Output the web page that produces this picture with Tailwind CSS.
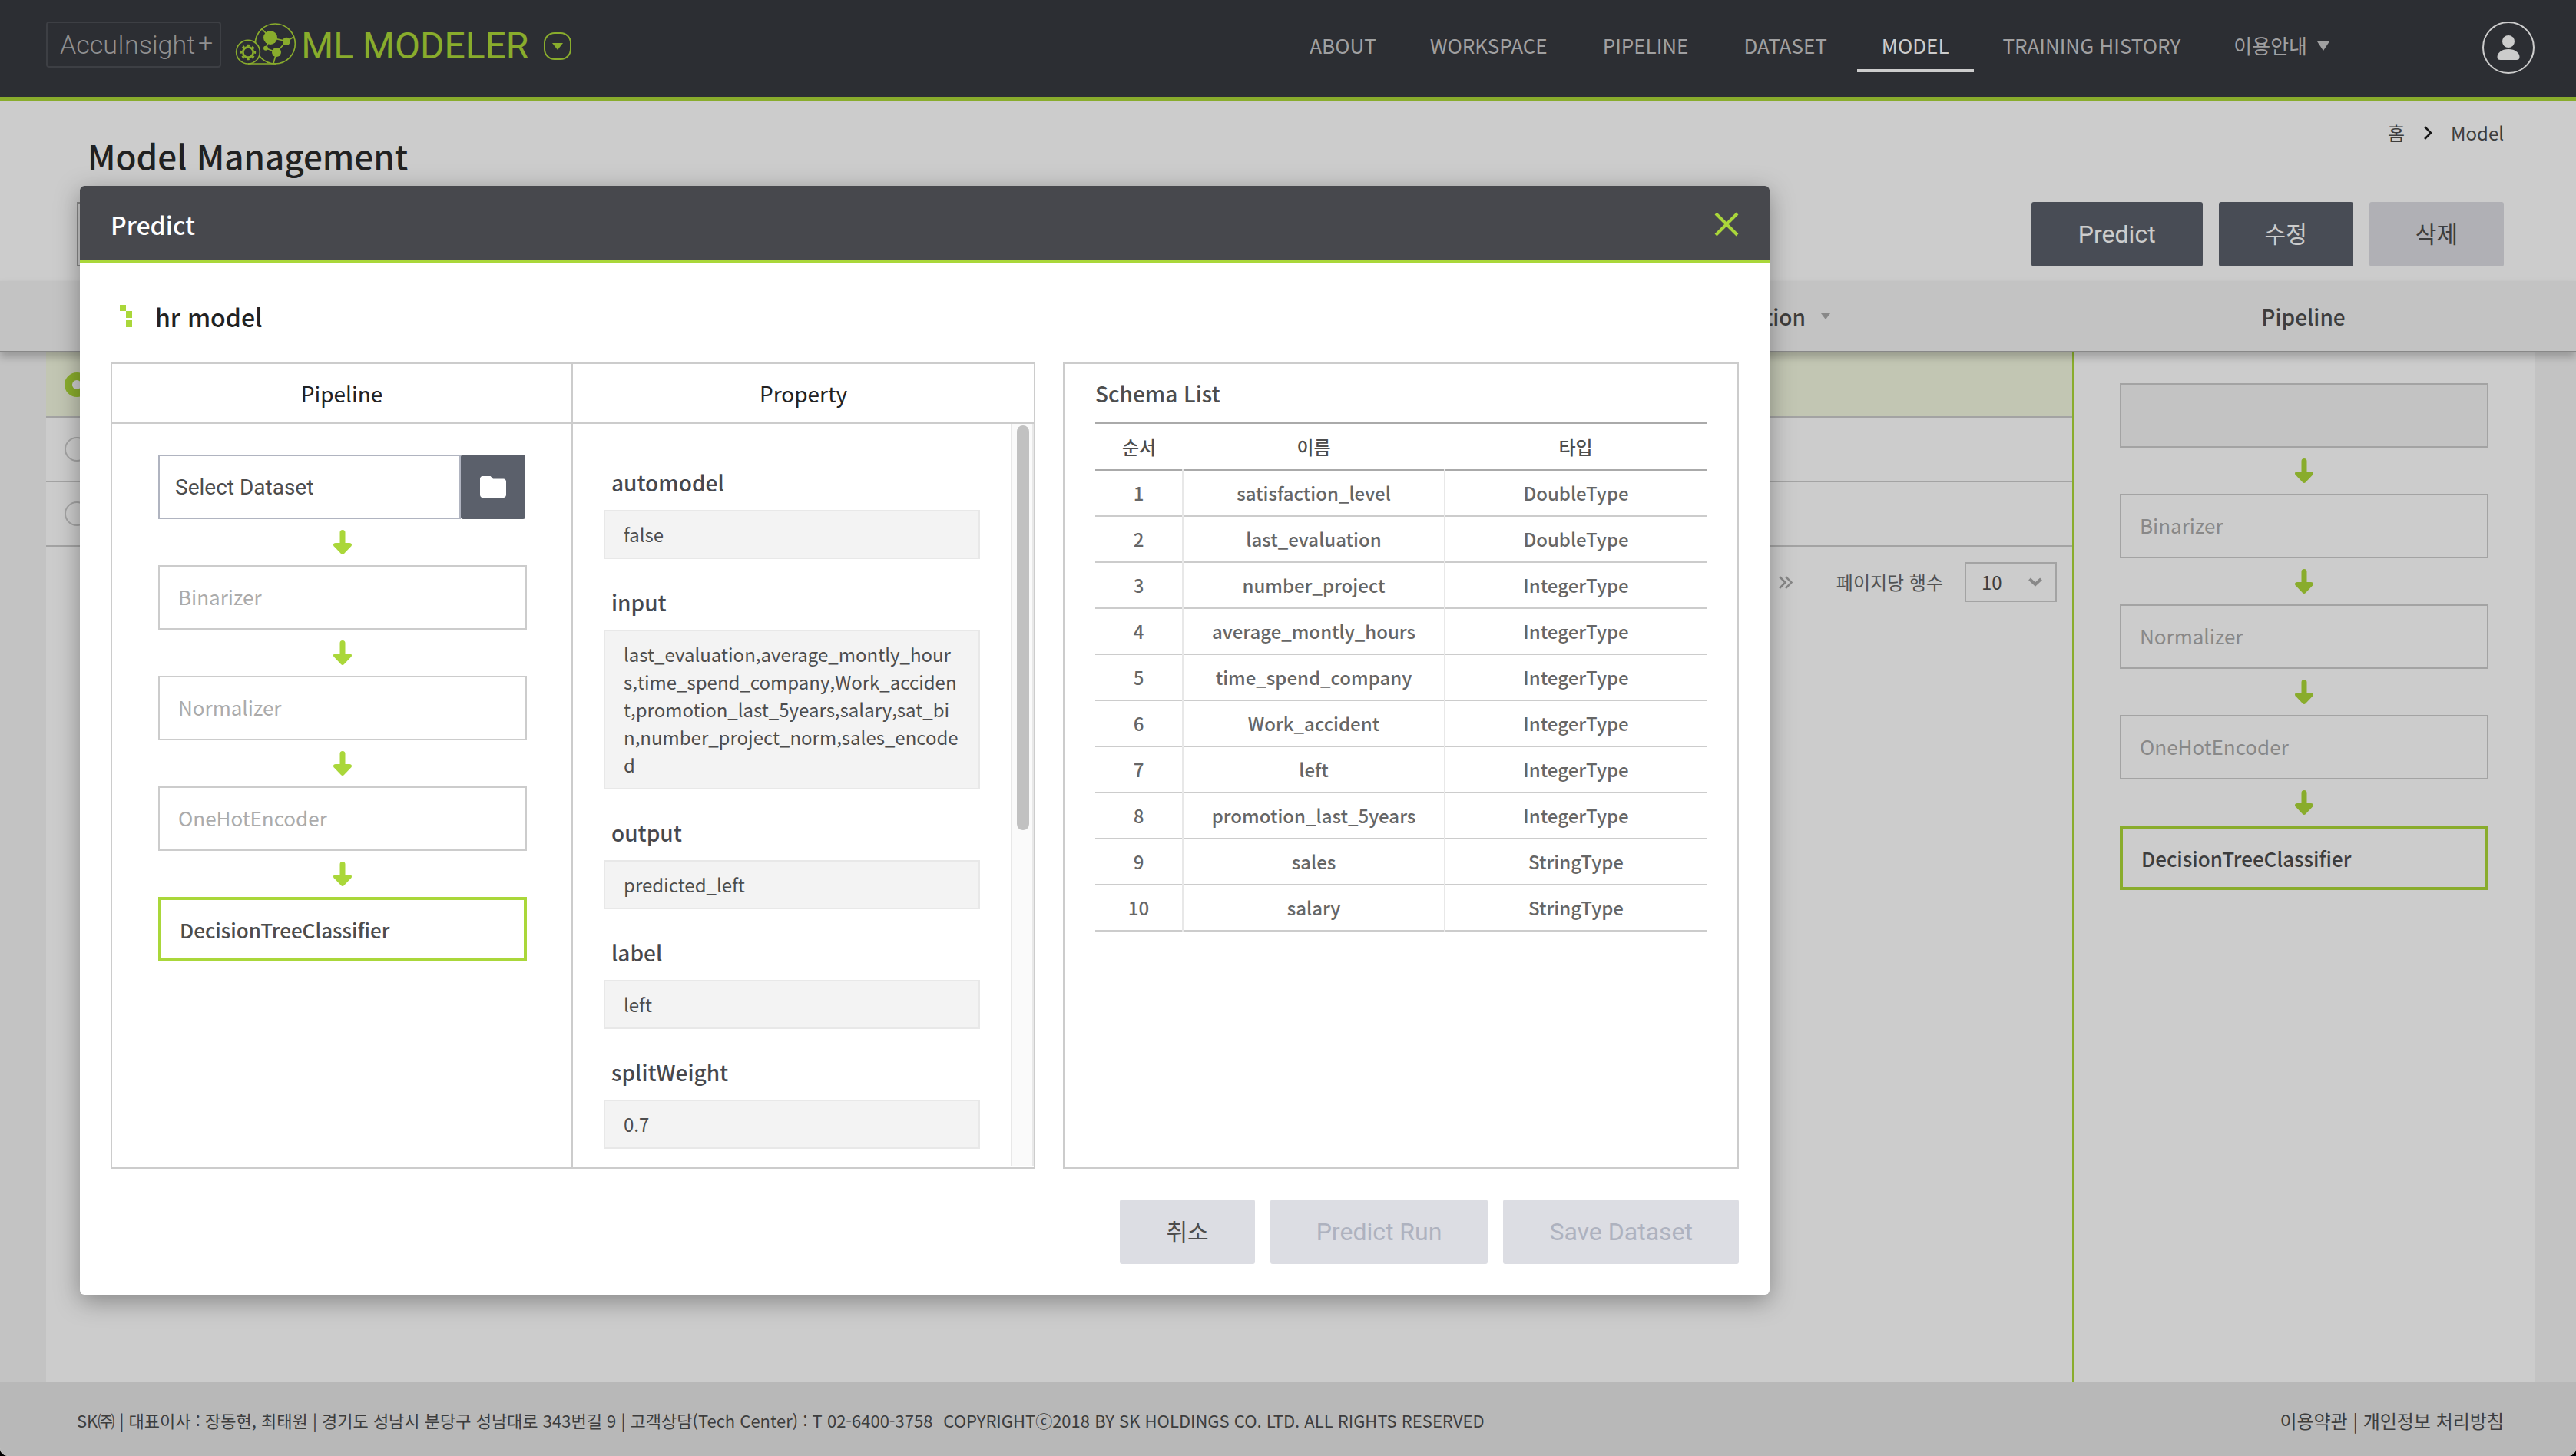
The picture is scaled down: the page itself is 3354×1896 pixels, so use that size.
<!DOCTYPE html>
<html lang="ko" class="bg-black">
<head>
<meta charset="utf-8">
<title>Model Management</title>
<script src="https://cdn.jsdelivr.net/npm/@tailwindcss/browser@4"></script>
</head>
<body class="font-['Noto_Sans_CJK_KR',sans-serif] text-[24px] text-[#4d4d4d]">
<svg class="hidden" aria-hidden="true">
  <symbol id="arrow-down" viewBox="0 0 24 32">
    <path fill="currentColor" d="M8.500 3.500a3.500 3.500 0 0 1 7 0V17H21c3.200 0 4 3.200 1.600 5L14 31c-1.200 1.200-2.800 1.200-4 0L1.400 22C-1 20.200-.2 17 3 17h5.500z"/>
  </symbol>
</svg>

<div class="relative flex min-h-screen flex-col overflow-hidden rounded-b-[10px] bg-white">
  <header class="flex h-[132px] items-start border-b-[6px] border-[#acd838] bg-[#383a40] pl-[60px] pr-[54px] pt-7">
    <a href="#" class="flex h-[60px] items-start rounded-[4px] border-2 border-[#4d4f55] pl-4 pr-[9px] font-[Roboto,sans-serif] text-[34px] font-light leading-[56px] text-[#b4b4b6]">AccuInsight<span class="pl-1 leading-[50px]">+</span></a>
    <div class="ml-[18px] flex items-center gap-5 pt-[2px] text-[#acd838]">
      <a href="#" class="flex items-center gap-[6px]">
        <svg class="-mt-[6px] h-[56px] w-[80px]" viewBox="51 57 240 168" fill="none" stroke="currentColor" stroke-width="5" aria-hidden="true">
          <circle cx="208" cy="141" r="78"/>
          <path d="M155 82l34 35 63 14 29-17M252 131l-39 43-42-16 18-41M213 174l-12 44"/>
          <g fill="currentColor" stroke="none"><circle cx="189" cy="117" r="27"/><circle cx="252" cy="131" r="15"/><circle cx="213" cy="174" r="18"/><circle cx="171" cy="158" r="9"/></g>
          <circle cx="102" cy="173" r="46" fill="#383a40"/>
          <path d="M102 219h108"/>
          <circle cx="102" cy="174" r="20" stroke-width="8"/>
          <circle cx="102" cy="174" r="27" stroke-width="7" stroke-dasharray="11 10.200" stroke-dashoffset="5.500"/>
        </svg>
        <span class="font-[Roboto,sans-serif] text-[48px] leading-[60px]">ML MODELER</span>
      </a>
      <button type="button" aria-label="Switch product" class="flex size-9 items-center justify-center rounded-[14px] border-2 border-[#acd838]">
        <svg class="h-[9px] w-[14px]" viewBox="0 0 14 9" fill="currentColor"><path d="M0 0h14L7 9z"/></svg>
      </button>
    </div>
    <nav class="ml-auto flex items-start text-[26px] text-[#c8c8ca]">
      <a href="#" class="pl-9 pr-[34px] leading-[62px]">ABOUT</a>
      <a href="#" class="px-9 leading-[62px]">WORKSPACE</a>
      <a href="#" class="px-9 leading-[62px]">PIPELINE</a>
      <a href="#" class="pl-9 pr-[39px] leading-[62px]">DATASET</a>
      <a href="#" aria-current="page" class="border-b-4 border-white px-8 leading-[62px] text-white">MODEL</a>
      <a href="#" class="pl-[38px] pr-9 leading-[62px]">TRAINING HISTORY</a>
      <a href="#" class="flex items-center gap-3 pl-[33px] leading-[62px]">이용안내<svg class="h-[13px] w-[18px]" viewBox="0 0 16 12" fill="currentColor"><path d="M0 0h16L8 12z"/></svg></a>
    </nav>
    <button type="button" aria-label="Account" class="ml-[198px] flex size-[68px] items-center justify-center rounded-full border-2 border-white text-white">
      <svg class="h-8 w-[30px]" viewBox="0 0 30 32" fill="currentColor"><circle cx="15" cy="8" r="8"/><path d="M15 18c9 0 14.500 5 14.500 10 0 3-1.500 4-4 4h-21c-2.500 0-4-1-4-4C.5 23 6 18 15 18z"/></svg>
    </button>
  </header>

  <section class="flex h-[234px] justify-between pl-[100px] pr-[94px]">
    <div class="pt-[38px]">
      <h1 class="pl-[14px] text-[44px] font-medium leading-[64px] text-[#2a2a2a]">Model Management</h1>
      <input type="search" aria-label="Search models" class="mt-[29px] block h-[84px] w-[600px] border-2 border-[#aaa] px-6">
    </div>
    <div class="flex flex-col items-end pt-[21px]">
      <ol class="flex items-center leading-[40px]">
        <li><a href="#">홈</a></li>
        <li class="flex items-center gap-6 pl-[25px]"><svg class="h-[18px] w-[11px]" viewBox="0 0 11 18" fill="none" stroke="#1c1c1c" stroke-width="2.500"><path d="M1 1l8 8-8 8"/></svg><a href="#">Model</a></li>
      </ol>
      <div class="mt-[70px] flex gap-[21px] font-[Roboto,'Noto_Sans_CJK_KR',sans-serif] text-[32px]">
        <button type="button" class="h-[84px] rounded-[3px] bg-[#5b606b] px-[61px] text-white">Predict</button>
        <button type="button" class="h-[84px] rounded-[3px] bg-[#5b606b] px-[60px] text-[30px] text-white">수정</button>
        <button type="button" class="h-[84px] rounded-[3px] bg-[#dcdde3] px-[60px] text-[30px]">삭제</button>
      </div>
    </div>
  </section>

  <div class="relative flex h-[93px] items-center border-b-2 border-[#aaa] bg-[#f4f4f4] pl-[60px] pr-[54px] text-[28px] font-medium shadow-[0_6px_10px_rgba(0,0,0,0.22)]">
    <div class="flex flex-1 items-center justify-end gap-5 pr-[315px]">Description<svg class="h-2 w-3" viewBox="0 0 12 8" fill="#aaa"><path d="M0 0h12L6 8z"/></svg></div>
    <h2 class="w-[602px] text-center">Pipeline</h2>
  </div>

  <main class="flex flex-1 bg-[#f4f4f4] pl-[60px] pr-[54px]">
    <section class="flex-1 bg-white">
      <div class="flex h-[85px] items-center border-b-2 border-[#ccc] bg-[#f3f8e0] pl-6"><input type="radio" name="model" checked aria-label="Model 1" class="size-8 appearance-none rounded-full border-[10px] border-[#acd838] bg-white"></div>
      <div class="flex h-[84px] items-center border-b-2 border-[#ccc] pl-6"><input type="radio" name="model" aria-label="Model 2" class="size-8 appearance-none rounded-full border-2 border-[#ccc]"></div>
      <div class="flex h-[84px] items-center border-b-2 border-[#ccc] pl-6"><input type="radio" name="model" aria-label="Model 3" class="size-8 appearance-none rounded-full border-2 border-[#ccc]"></div>
      <div class="flex items-center justify-end pr-5 pt-5 text-[#666]">
        <button type="button" aria-label="Last page" class="mr-[57px] text-[#aaa]"><svg class="h-[17px] w-[18px]" viewBox="0 0 18 17" fill="none" stroke="currentColor" stroke-width="2.500"><path d="M1 1l7.500 7.500L1 16M9 1l7.500 7.500L9 16"/></svg></button>
        <label for="rows">페이지당 행수</label>
        <div class="relative ml-7 w-[120px]">
          <select id="rows" class="h-[52px] w-full appearance-none border-2 border-[#ccc] bg-white pl-5 leading-[48px] text-[#4d4d4d]"><option>10</option></select>
          <svg class="pointer-events-none absolute right-[19px] top-5 h-3 w-[18px]" viewBox="0 0 18 12" fill="none" stroke="#aaa" stroke-width="4"><path d="M1.500 2L9 9l7.500-7"/></svg>
        </div>
      </div>
    </section>
    <aside class="w-[602px] border-l-2 border-[#acd838] bg-white px-[60px] pt-10 text-[26px]">
      <ol class="flex flex-col text-[#acd838]">
        <li class="h-[84px] border-2 border-[#ccc] bg-[#f4f4f4]"></li>
        <li class="flex flex-col items-center"><svg class="my-[14px] h-8 w-6"><use href="#arrow-down"/></svg><div class="h-[84px] w-full border-2 border-[#ccc] px-6 leading-[78px] text-[#ababab]">Binarizer</div></li>
        <li class="flex flex-col items-center"><svg class="my-[14px] h-8 w-6"><use href="#arrow-down"/></svg><div class="h-[84px] w-full border-2 border-[#ccc] px-6 leading-[78px] text-[#ababab]">Normalizer</div></li>
        <li class="flex flex-col items-center"><svg class="my-[14px] h-8 w-6"><use href="#arrow-down"/></svg><div class="h-[84px] w-full border-2 border-[#ccc] px-6 leading-[78px] text-[#ababab]">OneHotEncoder</div></li>
        <li class="flex flex-col items-center"><svg class="my-[14px] h-8 w-6"><use href="#arrow-down"/></svg><div class="h-[84px] w-full border-4 border-[#acd838] px-6 font-medium leading-[78px] text-[#4d4d4d]">DecisionTreeClassifier</div></li>
      </ol>
    </aside>
  </main>

  <footer class="flex h-[97px] items-center bg-[#e7e7e7] pl-[100px] pr-[94px] pt-1">
    <p class="text-[22px]">SK㈜ | 대표이사 : 장동현, 최태원 | 경기도 성남시 분당구 성남대로 343번길 9 | 고객상담(Tech Center) : T 02-6400-3758</p>
    <p class="ml-[14px] text-[22px]">COPYRIGHTⓒ2018 BY SK HOLDINGS CO. LTD. ALL RIGHTS RESERVED</p>
    <p class="ml-auto"><a href="#">이용약관</a> | <a href="#">개인정보 처리방침</a></p>
  </footer>

  <!-- Predict dialog -->
  <div class="absolute inset-0 bg-black/20 pl-[104px] pt-[242px]">
    <div role="dialog" aria-modal="true" aria-labelledby="dialog-title" class="w-[2200px] max-w-full overflow-hidden rounded-[6px] bg-white shadow-[0_8px_32px_rgba(0,0,0,0.35)]">
      <div class="flex h-[100px] items-center justify-between border-b-4 border-[#aad73a] bg-[#47484d] px-10 pt-1 text-white">
        <h2 id="dialog-title" class="text-[32px] font-medium">Predict</h2>
        <button type="button" aria-label="Close"><svg class="h-8 w-8" viewBox="0 0 32 32" fill="none" stroke="#aad73a" stroke-width="4"><path d="M2 2l28 28M30 2L2 30"/></svg></button>
      </div>
      <div class="px-10 pb-10">
        <h3 class="flex h-[130px] items-center gap-[30px] pl-3 pt-[9px] text-[32px] font-medium text-[#222]">
          <svg class="h-[29px] w-4" viewBox="0 0 16 29" fill="#aad73a"><path d="M0 0h8v8H0zM8 8h8v9H8zM8 20h8v9H8z"/></svg>hr model
        </h3>
        <div class="flex h-[1050px] gap-9">
          <div class="grid w-[1204px] grid-cols-2 grid-rows-[78px_1fr] border-2 border-[#ccc] text-[28px]">
            <h4 class="flex items-center justify-center border-b-2 border-r-2 border-[#ccc] text-[#222]">Pipeline</h4>
            <h4 class="flex items-center justify-center border-b-2 border-[#ccc] text-[#222]">Property</h4>
            <div class="border-r-2 border-[#ccc] pl-[60px] pr-[58px] pt-10 text-[26px]">
              <ol class="flex flex-col text-[#aad73a]">
                <li class="flex pr-[2px]">
                  <input type="text" aria-label="Dataset" value="Select Dataset" readonly class="h-[84px] min-w-0 flex-1 border-2 border-[#b0b4c0] px-5 font-[Roboto,sans-serif] text-[28px] text-[#4d4d4d]">
                  <button type="button" aria-label="Browse datasets" class="flex size-[84px] items-center justify-center rounded-[3px] bg-[#5b606b]"><svg class="h-7 w-[34px]" viewBox="2 4 20 16" fill="#fff" preserveAspectRatio="none"><path d="M10 4H4c-1.100 0-2 .9-2 2v12c0 1.100.9 2 2 2h16c1.100 0 2-.9 2-2V8c0-1.100-.9-2-2-2h-8z"/></svg></button>
                </li>
                <li class="flex flex-col items-center"><svg class="my-[14px] h-8 w-6"><use href="#arrow-down"/></svg><div class="h-[84px] w-full border-2 border-[#ccc] px-6 leading-[78px] text-[#ababab]">Binarizer</div></li>
                <li class="flex flex-col items-center"><svg class="my-[14px] h-8 w-6"><use href="#arrow-down"/></svg><div class="h-[84px] w-full border-2 border-[#ccc] px-6 leading-[78px] text-[#ababab]">Normalizer</div></li>
                <li class="flex flex-col items-center"><svg class="my-[14px] h-8 w-6"><use href="#arrow-down"/></svg><div class="h-[84px] w-full border-2 border-[#ccc] px-6 leading-[78px] text-[#ababab]">OneHotEncoder</div></li>
                <li class="flex flex-col items-center"><svg class="my-[14px] h-8 w-6"><use href="#arrow-down"/></svg><div class="h-[84px] w-full border-4 border-[#aad73a] px-6 font-medium leading-[78px] text-[#4d4d4d]">DecisionTreeClassifier</div></li>
              </ol>
            </div>
            <div class="flex">
              <dl class="flex-1 pl-10 pr-10 pt-5 text-[24px] leading-9">
                <dt class="pb-4 pl-[10px] pt-9 text-[28px] font-medium leading-10 text-[#47484d]">automodel</dt>
                <dd class="break-all border-2 border-[#e8e8e8] bg-[#f3f3f3] px-6 py-3">false</dd>
                <dt class="pb-4 pl-[10px] pt-9 text-[28px] font-medium leading-10 text-[#47484d]">input</dt>
                <dd class="break-all border-2 border-[#e8e8e8] bg-[#f3f3f3] px-6 py-3">last_evaluation,average_montly_hours,time_spend_company,Work_accident,promotion_last_5years,salary,sat_bin,number_project_norm,sales_encoded</dd>
                <dt class="pb-4 pl-[10px] pt-9 text-[28px] font-medium leading-10 text-[#47484d]">output</dt>
                <dd class="break-all border-2 border-[#e8e8e8] bg-[#f3f3f3] px-6 py-3">predicted_left</dd>
                <dt class="pb-4 pl-[10px] pt-9 text-[28px] font-medium leading-10 text-[#47484d]">label</dt>
                <dd class="break-all border-2 border-[#e8e8e8] bg-[#f3f3f3] px-6 py-3">left</dd>
                <dt class="pb-4 pl-[10px] pt-9 text-[28px] font-medium leading-10 text-[#47484d]">splitWeight</dt>
                <dd class="break-all border-2 border-[#e8e8e8] bg-[#f3f3f3] px-6 py-3">0.7</dd>
              </dl>
              <div class="mb-[2px] w-[30px] border-x-2 border-[#e8e8e8] bg-[#fafafa] px-[6px] pt-[2px]"><div class="h-[527px] w-4 rounded-full bg-[#c1c1c1]"></div></div>
            </div>
          </div>

          <div class="flex-1 border-2 border-[#ccc] px-10">
            <h4 class="h-[76px] text-[28px] font-medium leading-[76px]">Schema List</h4>
            <table class="w-full table-fixed border-collapse text-center font-medium text-[#666]">
              <colgroup><col class="w-[114px]"><col class="w-[341px]"><col></colgroup>
              <thead>
                <tr class="h-[61px] border-y-2 border-[#aaa] text-[#4d4d4d]"><th class="font-medium" scope="col">순서</th><th class="font-medium" scope="col">이름</th><th class="font-medium" scope="col">타입</th></tr>
              </thead>
              <tbody class="divide-y-2 divide-[#ccc] border-b-2 border-[#ccc]">
                <tr class="h-[60px]"><td>1</td><td class="border-x-2 border-x-[#e8e8e8]">satisfaction_level</td><td>DoubleType</td></tr>
                <tr class="h-[60px]"><td>2</td><td class="border-x-2 border-x-[#e8e8e8]">last_evaluation</td><td>DoubleType</td></tr>
                <tr class="h-[60px]"><td>3</td><td class="border-x-2 border-x-[#e8e8e8]">number_project</td><td>IntegerType</td></tr>
                <tr class="h-[60px]"><td>4</td><td class="border-x-2 border-x-[#e8e8e8]">average_montly_hours</td><td>IntegerType</td></tr>
                <tr class="h-[60px]"><td>5</td><td class="border-x-2 border-x-[#e8e8e8]">time_spend_company</td><td>IntegerType</td></tr>
                <tr class="h-[60px]"><td>6</td><td class="border-x-2 border-x-[#e8e8e8]">Work_accident</td><td>IntegerType</td></tr>
                <tr class="h-[60px]"><td>7</td><td class="border-x-2 border-x-[#e8e8e8]">left</td><td>IntegerType</td></tr>
                <tr class="h-[60px]"><td>8</td><td class="border-x-2 border-x-[#e8e8e8]">promotion_last_5years</td><td>IntegerType</td></tr>
                <tr class="h-[60px]"><td>9</td><td class="border-x-2 border-x-[#e8e8e8]">sales</td><td>StringType</td></tr>
                <tr class="h-[60px]"><td>10</td><td class="border-x-2 border-x-[#e8e8e8]">salary</td><td>StringType</td></tr>
              </tbody>
            </table>
          </div>
        </div>
        <div class="flex justify-end gap-5 pt-10 font-[Roboto,'Noto_Sans_CJK_KR',sans-serif] text-[32px]">
          <button type="button" class="h-[84px] rounded-[3px] bg-[#dcdde3] px-[60px] text-[30px]">취소</button>
          <button type="button" disabled class="h-[84px] rounded-[3px] bg-[#dcdde3] px-[60px] text-[#aeb2bf]">Predict Run</button>
          <button type="button" disabled class="h-[84px] rounded-[3px] bg-[#dcdde3] px-[60px] text-[#aeb2bf]">Save Dataset</button>
        </div>
      </div>
    </div>
  </div>
</div>
</body>
</html>
